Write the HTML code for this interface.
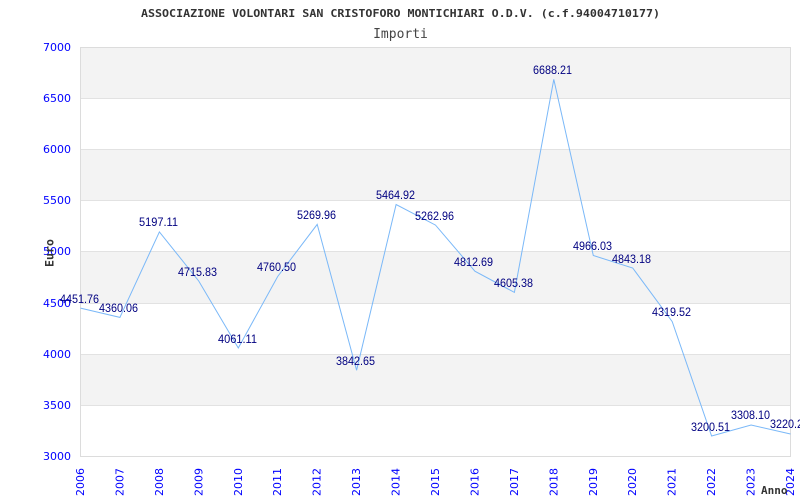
<!DOCTYPE html>
<html><head><meta charset="utf-8"><style>
html,body{margin:0;padding:0;background:#fff;width:800px;height:500px;overflow:hidden}
svg{display:block}
.y{font:11px "DejaVu Sans",sans-serif;fill:#0000ff;text-anchor:end}
.x{font:11px "DejaVu Sans",sans-serif;fill:#0000ff;text-anchor:end}
.d{font:12px "Liberation Sans",sans-serif;fill:#000080;text-anchor:middle}
</style></head><body>
<svg width="800" height="500" viewBox="0 0 800 500" xmlns="http://www.w3.org/2000/svg">
<rect x="80" y="47" width="711" height="51" fill="#f3f3f3"/>
<rect x="80" y="149" width="711" height="51" fill="#f3f3f3"/>
<rect x="80" y="251" width="711" height="52" fill="#f3f3f3"/>
<rect x="80" y="354" width="711" height="51" fill="#f3f3f3"/>
<g stroke="#e2e2e2" stroke-width="1" fill="none">
<path d="M80 98.5H791M80 149.5H791M80 200.5H791M80 251.5H791M80 303.5H791M80 354.5H791M80 405.5H791"/>
</g>
<rect x="80.5" y="47.5" width="710" height="409" fill="none" stroke="#dcdcdc"/>
<text x="141" y="17" textLength="519" lengthAdjust="spacingAndGlyphs" style="font:bold 11px 'DejaVu Sans Mono',monospace;fill:#333">ASSOCIAZIONE VOLONTARI SAN CRISTOFORO MONTICHIARI O.D.V. (c.f.94004710177)</text>
<text x="400.5" y="38" text-anchor="middle" style="font:13px 'DejaVu Sans Mono',monospace;fill:#444">Importi</text>
<g class="yl">
<text class="y" x="71" y="51">7000</text><text class="y" x="71" y="102">6500</text><text class="y" x="71" y="153">6000</text><text class="y" x="71" y="204">5500</text><text class="y" x="71" y="255">5000</text><text class="y" x="71" y="307">4500</text><text class="y" x="71" y="358">4000</text><text class="y" x="71" y="409">3500</text><text class="y" x="71" y="460">3000</text>
</g>
<g>
<text class="x" transform="translate(84,468) rotate(-90)">2006</text>
<text class="x" transform="translate(123.4,468) rotate(-90)">2007</text>
<text class="x" transform="translate(162.9,468) rotate(-90)">2008</text>
<text class="x" transform="translate(202.3,468) rotate(-90)">2009</text>
<text class="x" transform="translate(241.8,468) rotate(-90)">2010</text>
<text class="x" transform="translate(281.2,468) rotate(-90)">2011</text>
<text class="x" transform="translate(320.7,468) rotate(-90)">2012</text>
<text class="x" transform="translate(360.1,468) rotate(-90)">2013</text>
<text class="x" transform="translate(399.6,468) rotate(-90)">2014</text>
<text class="x" transform="translate(439,468) rotate(-90)">2015</text>
<text class="x" transform="translate(478.4,468) rotate(-90)">2016</text>
<text class="x" transform="translate(517.9,468) rotate(-90)">2017</text>
<text class="x" transform="translate(557.3,468) rotate(-90)">2018</text>
<text class="x" transform="translate(596.8,468) rotate(-90)">2019</text>
<text class="x" transform="translate(636.2,468) rotate(-90)">2020</text>
<text class="x" transform="translate(675.7,468) rotate(-90)">2021</text>
<text class="x" transform="translate(715.1,468) rotate(-90)">2022</text>
<text class="x" transform="translate(754.6,468) rotate(-90)">2023</text>
<text class="x" transform="translate(794,468) rotate(-90)">2024</text>
</g>
<text transform="translate(53.5,267) rotate(-90)" style="font:bold 11.6px 'DejaVu Sans Mono',monospace;fill:#333">Euro</text>
<text x="761" y="494" style="font:bold 11px 'DejaVu Sans Mono',monospace;fill:#333">Anno</text>
<polyline fill="none" stroke="#7ab8f8" stroke-width="1" points="80.5,308.1 119.9,317.4 159.4,231.9 198.8,281.1 238.3,348 277.7,276.5 317.2,224.4 356.6,370.3 396.1,204.5 435.5,225.1 474.9,271.2 514.4,292.4 553.8,79.4 593.3,255.5 632.7,268 672.2,321.6 711.6,436 751.1,425 790.5,434"/>
<g>
<text class="d" x="79.5" y="303" textLength="39" lengthAdjust="spacingAndGlyphs">4451.76</text>
<text class="d" x="118.5" y="312" textLength="39" lengthAdjust="spacingAndGlyphs">4360.06</text>
<text class="d" x="158.5" y="226" textLength="39" lengthAdjust="spacingAndGlyphs">5197.11</text>
<text class="d" x="197.5" y="276" textLength="39" lengthAdjust="spacingAndGlyphs">4715.83</text>
<text class="d" x="237.5" y="343" textLength="39" lengthAdjust="spacingAndGlyphs">4061.11</text>
<text class="d" x="276.5" y="271" textLength="39" lengthAdjust="spacingAndGlyphs">4760.50</text>
<text class="d" x="316.5" y="219" textLength="39" lengthAdjust="spacingAndGlyphs">5269.96</text>
<text class="d" x="355.5" y="365" textLength="39" lengthAdjust="spacingAndGlyphs">3842.65</text>
<text class="d" x="395.5" y="199" textLength="39" lengthAdjust="spacingAndGlyphs">5464.92</text>
<text class="d" x="434.5" y="220" textLength="39" lengthAdjust="spacingAndGlyphs">5262.96</text>
<text class="d" x="473.5" y="266" textLength="39" lengthAdjust="spacingAndGlyphs">4812.69</text>
<text class="d" x="513.5" y="287" textLength="39" lengthAdjust="spacingAndGlyphs">4605.38</text>
<text class="d" x="552.5" y="74" textLength="39" lengthAdjust="spacingAndGlyphs">6688.21</text>
<text class="d" x="592.5" y="250" textLength="39" lengthAdjust="spacingAndGlyphs">4966.03</text>
<text class="d" x="631.5" y="263" textLength="39" lengthAdjust="spacingAndGlyphs">4843.18</text>
<text class="d" x="671.5" y="316" textLength="39" lengthAdjust="spacingAndGlyphs">4319.52</text>
<text class="d" x="710.5" y="431" textLength="39" lengthAdjust="spacingAndGlyphs">3200.51</text>
<text class="d" x="750.5" y="419" textLength="39" lengthAdjust="spacingAndGlyphs">3308.10</text>
<text class="d" x="789.5" y="428" textLength="39" lengthAdjust="spacingAndGlyphs">3220.20</text>
</g>
</svg>
</body></html>
